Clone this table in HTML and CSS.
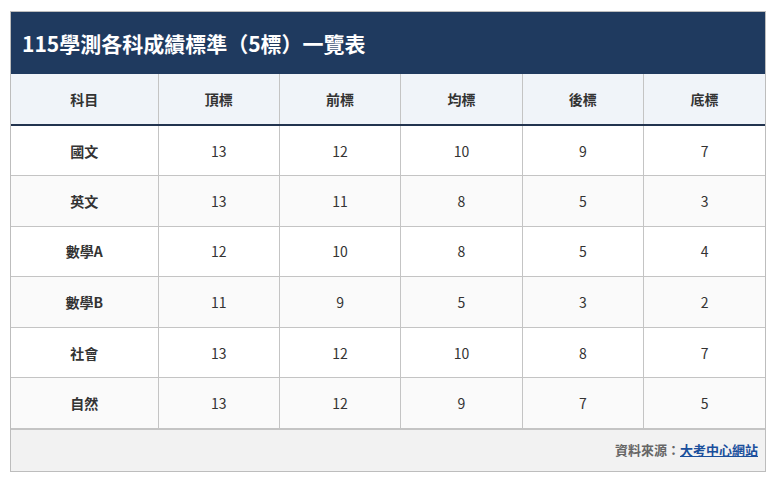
FILE: index.html
```html
<!DOCTYPE html>
<html lang="zh-Hant">
<head>
<meta charset="utf-8">
<link rel="stylesheet" href="styles.css">
</head>
<body>
<div class="card">
  <div class="title">115學測各科成績標準（5標）一覽表</div>
  <table class="scores">
    <colgroup>
      <col class="c-subject"><col><col><col><col><col>
    </colgroup>
    <thead>
      <tr><th>科目</th><th>頂標</th><th>前標</th><th>均標</th><th>後標</th><th>底標</th></tr>
    </thead>
    <tbody>
      <tr><td class="subj">國文</td><td>13</td><td>12</td><td>10</td><td>9</td><td>7</td></tr>
      <tr><td class="subj">英文</td><td>13</td><td>11</td><td>8</td><td>5</td><td>3</td></tr>
      <tr><td class="subj">數學A</td><td>12</td><td>10</td><td>8</td><td>5</td><td>4</td></tr>
      <tr><td class="subj">數學B</td><td>11</td><td>9</td><td>5</td><td>3</td><td>2</td></tr>
      <tr><td class="subj">社會</td><td>13</td><td>12</td><td>10</td><td>8</td><td>7</td></tr>
      <tr><td class="subj">自然</td><td>13</td><td>12</td><td>9</td><td>7</td><td>5</td></tr>
    </tbody>
  </table>
  <div class="source">資料來源：<a href="#">大考中心網站</a></div>
</div>
</body>
</html>
```
FILE: styles.css
```css
* { box-sizing: border-box; }
body {
  margin: 0;
  padding: 11px 8px 0 10px;
  background: #ffffff;
  font-family: "Noto Sans CJK TC", "Noto Sans", sans-serif;
  color: #333333;
}
.card {
  width: 756px;
  border: 1px solid #bdbdbd;
}
.title {
  background: #1f3a5f;
  color: #ffffff;
  font-size: 21px;
  font-weight: 700;
  line-height: 30px;
  padding: 16px 11px;
}
.scores {
  width: 100%;
  border-collapse: collapse;
  table-layout: fixed;
  font-size: 14px;
}
.c-subject { width: 147px; }
.scores th,
.scores td {
  text-align: center;
  border: 1px solid #c4c4c4;
  line-height: 20px;
  padding: 0;
}
.scores tr > :first-child { border-left: none; }
.scores tr > :last-child { border-right: none; }
.scores thead tr > * { border-top: none; }
.scores th {
  background: #f0f4f9;
  font-weight: 700;
  color: #333333;
  height: 51px;
  border-bottom: 2px solid #22344f;
}
.scores td {
  height: 50.6px;
  color: #333333;
}
.scores tbody tr:nth-child(even) td { background: #fafafa; }
.scores td.subj { font-weight: 700; }
.source {
  background: #f2f2f2;
  border-top: 1px solid #c4c4c4;
  text-align: right;
  font-size: 13px;
  font-weight: 700;
  color: #666666;
  line-height: 20px;
  padding: 10px 7px 11px;
}
.source a {
  color: #1a4f9c;
  text-decoration: underline;
}
```
